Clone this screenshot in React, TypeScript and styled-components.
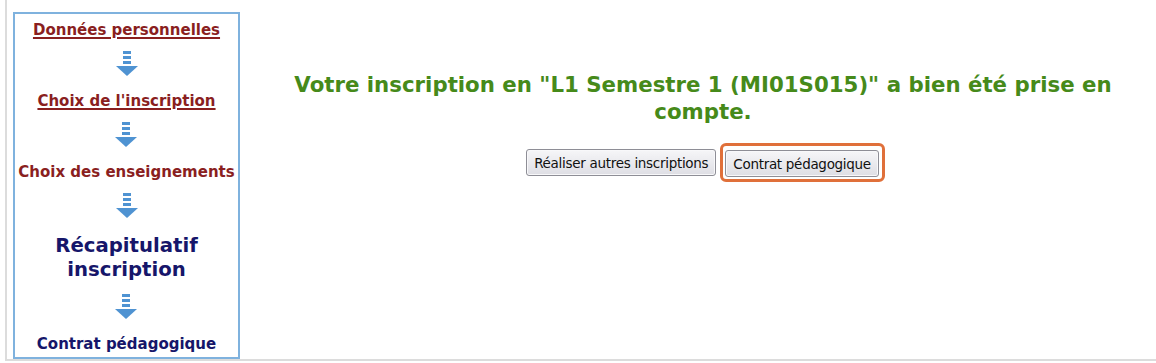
import styled, { createGlobalStyle } from "styled-components";

const GlobalStyle = createGlobalStyle`
  html, body {
    margin: 0;
    padding: 0;
    background: #ffffff;
  }
  body {
    font-family: "DejaVu Sans", Verdana, sans-serif;
  }
`;

const colors = {
  link: "#8a1f1f",
  current: "#16166a",
  green: "#468a1a",
  frame: "#7fb2de",
  rule: "#dcdcdc",
};

const steps = [
  { label: "Données personnelles", kind: "link" as const },
  { label: "Choix de l'inscription", kind: "link" as const },
  { label: "Choix des enseignements", kind: "done" as const },
  { label: "Récapitulatif inscription", kind: "current" as const },
  { label: "Contrat pédagogique", kind: "next" as const },
];

function DownArrow() {
  return (
    <ArrowBox>
      <svg width="24" height="26" viewBox="0 0 24 26">
        <rect x="8" y="0" width="8" height="3" fill="#4f93d2" />
        <rect x="8" y="5" width="8" height="3" fill="#4f93d2" />
        <rect x="8" y="10" width="8" height="3" fill="#4f93d2" />
        <polygon points="1,15 23,15 12,25" fill="#4f93d2" />
      </svg>
    </ArrowBox>
  );
}

export default function App() {
  return (
    <>
      <GlobalStyle />
      <Page>
        <Sidebar>
          {steps.map((s, i) => (
            <StepGroup key={s.label}>
              {i > 0 && <DownArrow />}
              <Step $kind={s.kind}>{s.label}</Step>
            </StepGroup>
          ))}
        </Sidebar>

        <Main>
          <Message>
            Votre inscription en "L1 Semestre 1 (MI01S015)" a bien été prise en compte.
          </Message>
          <Buttons>
            <Button type="button">Réaliser autres inscriptions</Button>
            <Highlight>
              <Button type="button">Contrat pédagogique</Button>
            </Highlight>
          </Buttons>
        </Main>
      </Page>
    </>
  );
}

const Page = styled.div`
  display: flex;
  align-items: flex-start;
  margin-left: 5px;
  height: 359px;
  border-left: 2px solid ${colors.rule};
  border-bottom: 2px solid ${colors.rule};
`;

const Sidebar = styled.div`
  box-sizing: border-box;
  margin: 12px 0 0 6px;
  width: 227px;
  height: 347px;
  border: 2px solid ${colors.frame};
  display: flex;
  flex-direction: column;
  align-items: center;
  padding-top: 7px;
`;

const StepGroup = styled.div`
  display: flex;
  flex-direction: column;
  align-items: center;
`;

const ArrowBox = styled.div`
  display: flex;
  justify-content: center;
  padding: 12px 0 15px;
  line-height: 0;
`;

const Step = styled.div<{ $kind: "link" | "done" | "current" | "next" }>`
  font-weight: bold;
  text-align: center;
  white-space: ${({ $kind }) => ($kind === "current" ? "normal" : "nowrap")};
  font-size: ${({ $kind }) => ($kind === "current" ? "19.7px" : "15px")};
  line-height: ${({ $kind }) => ($kind === "current" ? "24px" : "18px")};
  width: ${({ $kind }) => ($kind === "current" ? "180px" : "auto")};
  color: ${({ $kind }) =>
    $kind === "link" || $kind === "done" ? colors.link : colors.current};
  text-decoration: ${({ $kind }) => ($kind === "link" ? "underline" : "none")};
  text-underline-offset: 2px;
  text-decoration-thickness: 2px;
`;

const Main = styled.div`
  flex: 1;
  display: flex;
  flex-direction: column;
  align-items: center;
  padding-top: 71px;
  padding-left: 10px;
`;

const Message = styled.div`
  width: 850px;
  text-align: center;
  color: ${colors.green};
  font-weight: bold;
  font-size: 21.3px;
  line-height: 27px;
`;

const Buttons = styled.div`
  display: flex;
  align-items: center;
  gap: 4px;
  margin-top: 18px;
  margin-left: 5px;
`;

const Button = styled.button`
  font-family: "DejaVu Sans", Tahoma, sans-serif;
  font-size: 13.5px;
  letter-spacing: -0.3px;
  color: #111;
  height: 27px;
  padding: 0 7px;
  border: 1px solid #8e8e96;
  border-radius: 3px;
  background: linear-gradient(#f6f6f8, #dedee4);
  box-shadow: inset 0 0 0 1px #f8f8fa;
`;

const Highlight = styled.div`
  display: flex;
  padding: 4px 3px 2px 2px;
  border: 3px solid #e0703a;
  border-radius: 6px;
`;
